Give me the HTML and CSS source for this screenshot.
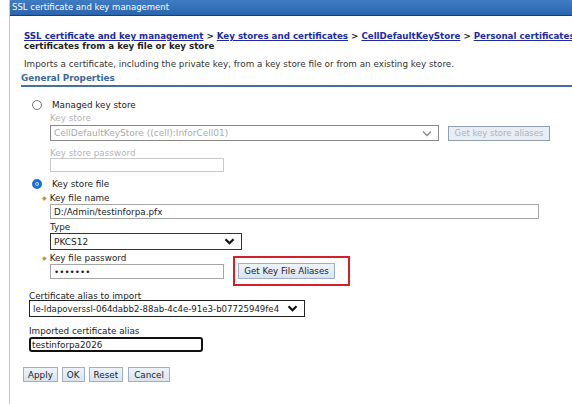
FILE: index.html
```html
<!DOCTYPE html>
<html lang="en">
<head>
  <meta charset="UTF-8">
  <meta name="viewport" content="width=device-width, initial-scale=1.0">
  <link rel="stylesheet" href="styles.css">
  <title>SSL certificate and key management</title>
</head>
<body>
  <div class="portlet">
    <div class="title-bar">SSL certificate and key management</div>

    <div class="content">
      <div class="breadcrumb">
        <a href="#">SSL certificate and key management</a> &gt;
        <a href="#">Key stores and certificates</a> &gt;
        <a href="#">CellDefaultKeyStore</a> &gt;
        <a href="#">Personal certificates</a> &gt; Import<br>
        certificates from a key file or key store
      </div>

      <p class="description">Imports a certificate, including the private key, from a key store file or from an existing key store.</p>

      <div class="section-title">General Properties</div>

      <form class="import-form" onsubmit="return false">
        <label class="radio-row">
          <span class="radio"></span>
          Managed key store
        </label>

        <div class="field disabled">
          <div class="field-label">Key store</div>
          <div class="row">
            <div class="select wide-select">
              <span>CellDefaultKeyStore ((cell):InforCell01)</span>
              <svg width="10" height="7" viewBox="0 0 10 7"><path d="M1 1.5 L5 5.5 L9 1.5" fill="none" stroke="#888" stroke-width="1.3"/></svg>
            </div>
            <button type="button" class="btn btn-disabled" disabled>Get key store aliases</button>
          </div>
        </div>

        <div class="field disabled password-field">
          <div class="field-label">Key store password</div>
          <div class="input short-input"></div>
        </div>

        <label class="radio-row checked-row">
          <span class="radio checked"></span>
          Key store file
        </label>

        <div class="field">
          <div class="field-label"><span class="req">&#9670;</span>Key file name</div>
          <div class="input long-input">D:/Admin/testinforpa.pfx</div>
        </div>

        <div class="field">
          <div class="field-label">Type</div>
          <div class="select type-select">
            <span>PKCS12</span>
            <svg width="11" height="7" viewBox="0 0 11 7"><path d="M1.5 1.2 L5.5 5.2 L9.5 1.2" fill="none" stroke="#111" stroke-width="2.2"/></svg>
          </div>
        </div>

        <div class="field">
          <div class="field-label"><span class="req">&#9670;</span>Key file password</div>
          <div class="row">
            <div class="input short-input password">&bull;&bull;&bull;&bull;&bull;&bull;&bull;</div>
            <div class="highlight">
              <button type="button" class="btn">Get Key File Aliases</button>
            </div>
          </div>
        </div>

        <div class="field outer alias-field">
          <div class="field-label">Certificate alias to import</div>
          <div class="select alias-select">
            <span>le-ldapoverssl-064dabb2-88ab-4c4e-91e3-b07725949fe4</span>
            <svg width="11" height="7" viewBox="0 0 11 7"><path d="M1.5 1.2 L5.5 5.2 L9.5 1.2" fill="none" stroke="#111" stroke-width="2.2"/></svg>
          </div>
        </div>

        <div class="field outer imported-field">
          <div class="field-label">Imported certificate alias</div>
          <div class="input alias-input">testinforpa2026</div>
        </div>

        <div class="buttons">
          <button type="button" class="btn">Apply</button>
          <button type="button" class="btn">OK</button>
          <button type="button" class="btn">Reset</button>
          <button type="button" class="btn">Cancel</button>
        </div>
      </form>
    </div>
  </div>
</body>
</html>
```

FILE: styles.css
```css
body {
  margin: 0;
  font-family: "DejaVu Sans", Verdana, sans-serif;
  font-size: 8.8px;
  color: #222;
  background-color: #fff;
}

.portlet {
  margin-left: 9px;
  border-left: 1px solid #c8c8c8;
  min-height: 404px;
  overflow: hidden;
}

.title-bar {
  height: 15px;
  line-height: 14px;
  padding-left: 2px;
  background: linear-gradient(#3f7cc4, #2b66ad);
  border-bottom: 1px solid #1d3f6b;
  color: #fff;
  font-size: 8.5px;
}

.content {
  padding: 0 0 0 14px;
}

.breadcrumb {
  margin-top: 15px;
  font-weight: bold;
  font-size: 8.7px;
  line-height: 10px;
  white-space: nowrap;
}

.breadcrumb a {
  color: #1e2ba0;
  text-decoration: underline;
}

.description {
  margin: 8px 0 0 0;
  line-height: 10px;
  color: #333;
}

.section-title {
  margin-top: 4px;
  margin-left: -3px;
  padding-bottom: 2px;
  border-bottom: 2px solid #4a7099;
  color: #3b6a98;
  font-weight: bold;
  line-height: 10px;
}

.import-form {
  padding-left: 8px;
  padding-top: 12px;
}

.radio-row {
  display: flex;
  align-items: center;
  gap: 10px;
  height: 12px;
  color: #222;
}

.radio {
  width: 10px;
  height: 10px;
  border: 1px solid #777;
  border-radius: 50%;
  box-sizing: border-box;
  background: #fff;
}

.radio.checked {
  border: 3px solid #1b6fd9;
  background: #1b6fd9;
  box-shadow: inset 0 0 0 1px #e8f1fc;
}

.checked-row {
  margin-top: 6px;
}

.field {
  margin-left: 18px;
  margin-top: 2px;
}

.checked-row + .field,
.field + .field {
  margin-top: 3px;
}

.field.password-field {
  margin-top: 7px;
}

.field-label {
  line-height: 10px;
  height: 10px;
}

.disabled .field-label {
  color: #b5b5b5;
}

.req {
  color: #b59a2e;
  font-size: 6px;
  margin-left: -8px;
  margin-right: 3px;
  vertical-align: 1px;
}

.row {
  display: flex;
  align-items: center;
}

.select,
.input {
  box-sizing: border-box;
  display: flex;
  align-items: center;
  background: #fff;
  padding-left: 3px;
  white-space: nowrap;
}

.select {
  justify-content: space-between;
  padding-right: 6px;
  font-size: 9px;
}

.wide-select {
  width: 389px;
  height: 16px;
  border: 1px solid #8a8a8a;
  color: #aaa;
  margin-top: 2px;
}

.short-input {
  width: 174px;
  height: 14px;
  border: 1px solid #c9c9c9;
}

.long-input {
  width: 489px;
  height: 15px;
  border: 1px solid #a6a6a6;
  margin-top: 1px;
}

.type-select {
  width: 192px;
  height: 17px;
  border: 1px solid #333;
  margin-top: 1px;
}

.password {
  height: 15px;
  border-color: #a6a6a6;
  margin-top: 1px;
}

.outer {
  margin-left: -3px;
}

.field.alias-field {
  margin-top: 12px;
}

.field.imported-field {
  margin-top: 9px;
}

.alias-select {
  width: 276px;
  height: 17px;
  border: 1px solid #222;
  font-size: 8.6px;
  margin-top: -1px;
}

.alias-input {
  width: 174px;
  height: 15px;
  border: 2px solid #111;
  border-radius: 3px;
  margin-top: 1px;
  padding-left: 1px;
}

.btn {
  font-family: "DejaVu Sans", Verdana, sans-serif;
  font-size: 8.7px;
  color: #222;
  background: linear-gradient(#eef3f9, #d9e4f0);
  border: 1px solid #9fb0c4;
  padding: 0 4px;
  height: 15px;
  line-height: 12px;
  cursor: pointer;
}

.btn-disabled {
  margin-left: 9px;
  width: 102px;
  height: 15px;
  color: #a9b3c0;
  background: #e9eef5;
  border-color: #8fa0b5;
  margin-top: 2px;
  font-size: 8.5px;
  white-space: nowrap;
  padding: 0 2px;
}

.highlight {
  margin: -9px 0 -8px 9px;
  padding: 5px 13px 5px 3px;
  border: 2px solid #d3212b;
}

.highlight .btn {
  width: 97px;
  height: 16px;
  display: block;
  padding: 0;
}

.buttons {
  display: flex;
  gap: 4px;
  margin-left: -9px;
  margin-top: 15px;
}

.buttons .btn {
  font-size: 8.8px;
  height: 15px;
  padding: 0 4px;
}

.buttons .btn:last-child {
  margin-left: 1px;
  padding: 0 5px;
}
```
